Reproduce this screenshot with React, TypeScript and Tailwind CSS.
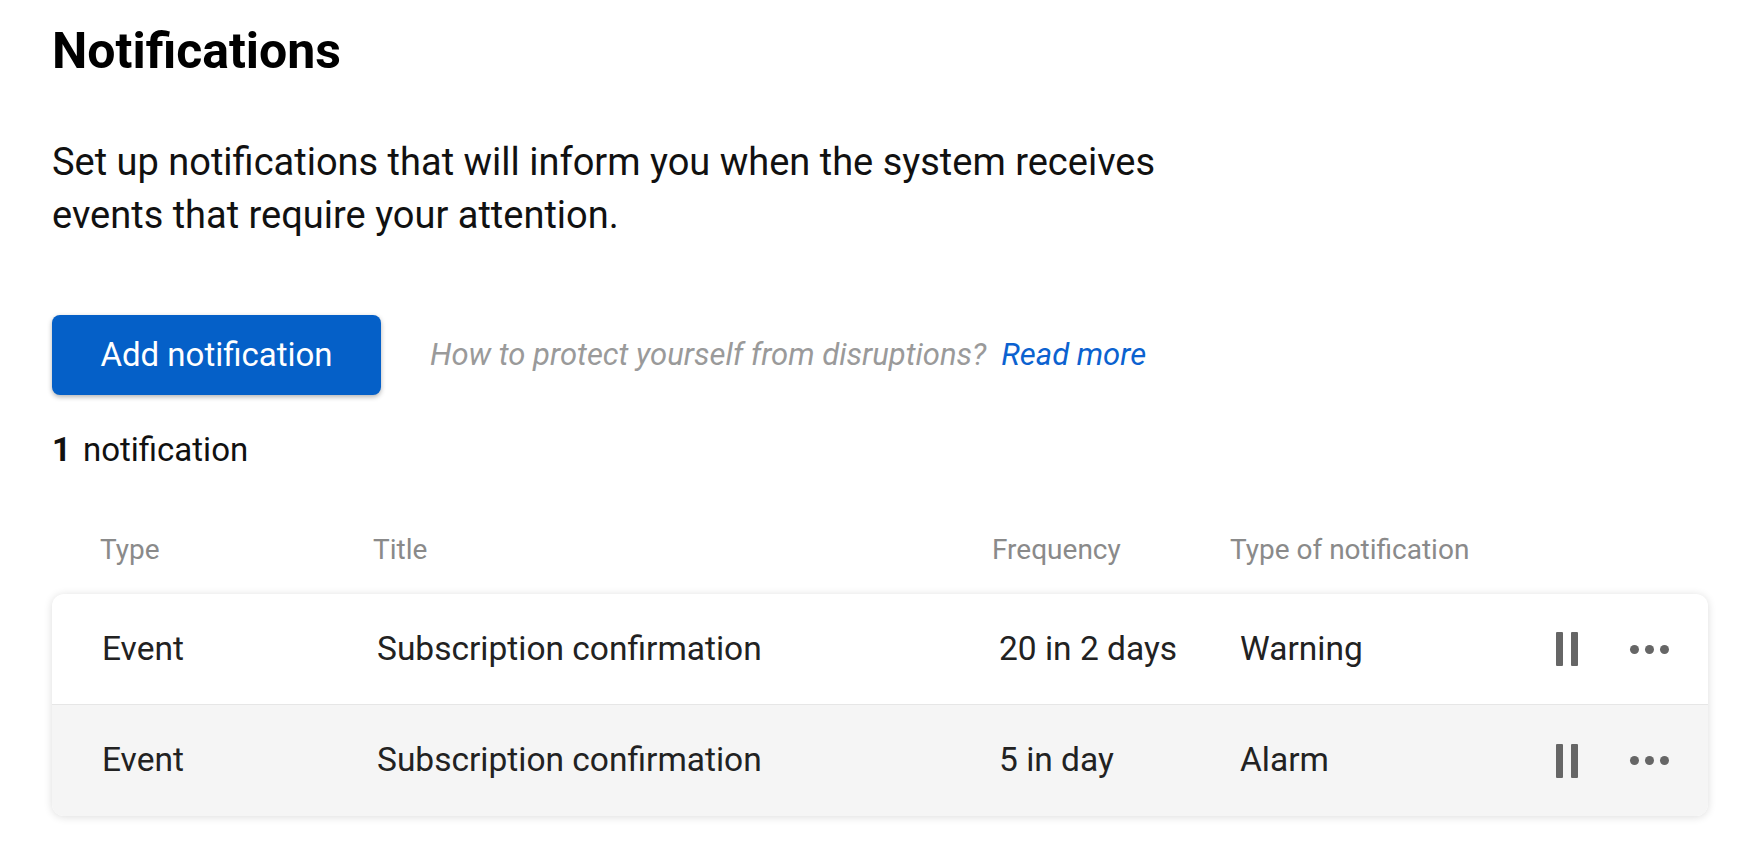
const rows = [
  { type: "Event", title: "Subscription confirmation", freq: "20 in 2 days", kind: "Warning" },
  { type: "Event", title: "Subscription confirmation", freq: "5 in day", kind: "Alarm" },
];

function PauseIcon() {
  return (
    <div className="flex gap-[8px] ml-[2px]">
      <div className="w-[7px] h-[34px] bg-[#666666] rounded-[1px]" />
      <div className="w-[7px] h-[34px] bg-[#666666] rounded-[1px]" />
    </div>
  );
}

function DotsIcon() {
  return (
    <div className="flex gap-[6px]">
      <div className="w-[9px] h-[9px] rounded-full bg-[#666666]" />
      <div className="w-[9px] h-[9px] rounded-full bg-[#666666]" />
      <div className="w-[9px] h-[9px] rounded-full bg-[#666666]" />
    </div>
  );
}

export default function App() {
  return (
    <div className="min-h-screen bg-white font-['Roboto',sans-serif] pl-[52px] pt-[26px] pr-[34px]">
      <h1 className="text-[50px] leading-[50px] font-bold text-black">Notifications</h1>

      <p className="mt-[60px] text-[38px] leading-[53px] text-[#111111] w-[1120px]">
        Set up notifications that will inform you when the system receives events that require your
        attention.
      </p>

      {/* ================= ACTIONS ================= */}

      <div className="mt-[73px] flex items-center">
        <button className="w-[329px] h-[80px] bg-[#0560c8] rounded-[8px] text-white text-[33px] font-normal shadow-[0_2px_5px_rgba(0,0,0,0.3)]">
          Add notification
        </button>
        <div className="ml-[49px] text-[31px] italic text-[#9a9a9a]">
          How to protect yourself from disruptions?
          <a className="ml-[15px] text-[#0b62d0]">Read more</a>
        </div>
      </div>

      <div className="mt-[35px] h-[40px] flex items-center text-[33px] text-[#111111]">
        <span className="font-bold mr-[12px]">1</span>
        <span>notification</span>
      </div>

      {/* ================= TABLE ================= */}

      <div className="h-[124px] pt-[36px] flex items-center text-[28px] text-[#8a8a8a] pl-[48px]">
        <div className="w-[273px]">Type</div>
        <div className="w-[619px]">Title</div>
        <div className="w-[238px]">Frequency</div>
        <div>Type of notification</div>
      </div>

      <div className="rounded-[12px] bg-white shadow-[0_1px_8px_rgba(0,0,0,0.14)] overflow-hidden">
        {rows.map((r, i) => (
          <div
            key={i}
            className={
              i === 0
                ? "h-[111px] flex items-center text-[33.5px] text-[#222222] pl-[50px] border-b border-[#e6e6e6]"
                : "h-[111px] flex items-center text-[33.5px] text-[#222222] pl-[50px] bg-[#f5f5f5]"
            }
          >
            <div className="w-[275px]">{r.type}</div>
            <div className="w-[622px]">{r.title}</div>
            <div className="w-[241px]">{r.freq}</div>
            <div className="w-[314px]">{r.kind}</div>
            <PauseIcon />
            <div className="ml-[52px]">
              <DotsIcon />
            </div>
          </div>
        ))}
      </div>
    </div>
  );
}
